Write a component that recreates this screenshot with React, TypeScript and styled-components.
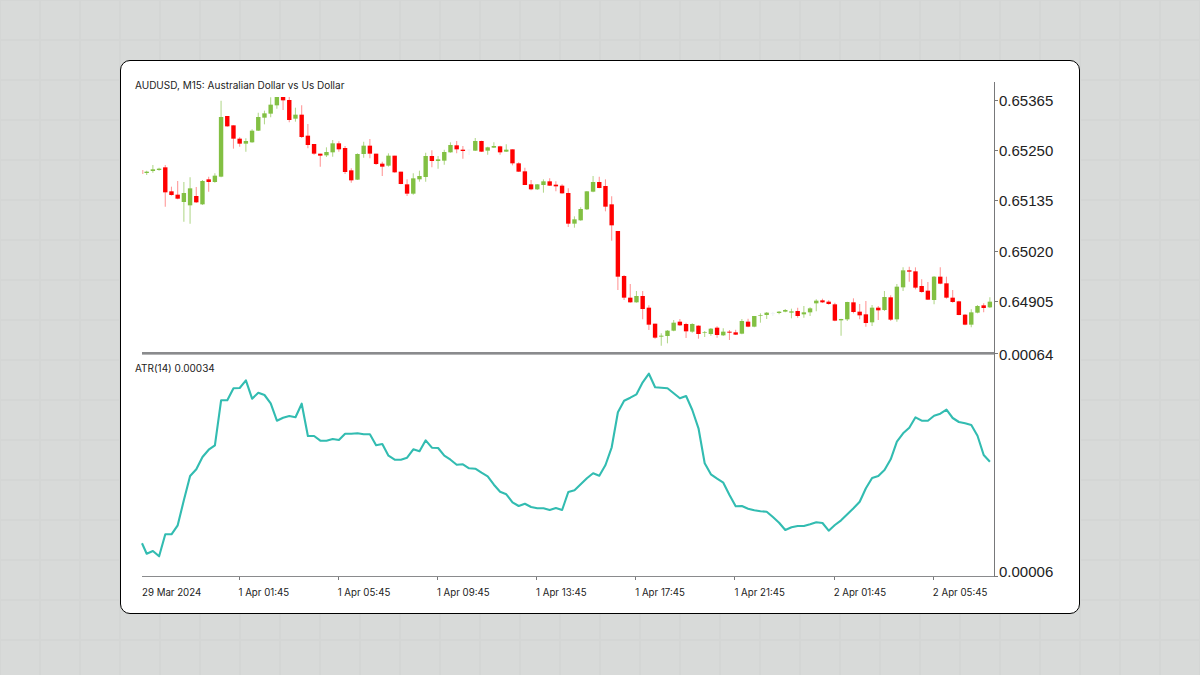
import React from 'react';
import styled, { createGlobalStyle } from 'styled-components';

const GlobalStyle = createGlobalStyle`
    html, body {
        margin: 0;
        padding: 0;
        background: #d8dad9;
    }
`;

const Page = styled.div`
    width: 1200px;
    height: 675px;
    box-sizing: border-box;
    padding-top: 60px;
    display: flex;
    justify-content: center;
    align-items: flex-start;
    background-color: #d8dad9;
    background-image:
        linear-gradient(to right, #d4d6d5 2px, transparent 2px),
        linear-gradient(to bottom, #d4d6d5 2px, transparent 2px);
    background-size: 40px 40px;
    background-position: 39px 39px;
    overflow: hidden;
`;
const Card = styled.main`
    width: 960px;
    height: 554px;
    box-sizing: border-box;
    padding-top: 21px;
    background: #fff;
    border: 1px solid #000;
    border-radius: 10px;
    font-family: Inter, "Liberation Sans", sans-serif;
    color: #222;
`;
const ChartBody = styled.div`
    display: flex;
    height: 495px;
`;
const Plot = styled.div`
    width: 873px;
    box-sizing: border-box;
    padding-left: 21px;
    display: flex;
    flex-direction: column;
`;
const Legend = styled.div<{ $height: number; $line: number }>`
    height: ${props => props.$height}px;
    line-height: ${props => props.$line}px;
    margin-left: -7px;
    font-size: 10px;
    white-space: nowrap;
`;
const Divider = styled.div`
    height: 3px;
    background: linear-gradient(to bottom, #8a8b8d 0, #8a8b8d 2px, #b4b5b6 2px);
`;
const PriceSvg = styled.svg`
    display: block;
    width: 852px;
    height: 255px;
    overflow: hidden;
`;
const AtrSvg = styled.svg`
    display: block;
    width: 852px;
    height: 203px;
    overflow: visible;
    border-bottom: 1px solid #8a8b8d;
`;
const Scale = styled.aside`
    width: 70px;
    box-sizing: border-box;
    padding-top: 9.5px;
    border-left: 1px solid #77787a;
    display: flex;
    flex-direction: column;
`;
const ScaleLabel = styled.div<{ $gap: number; $tick: number }>`
    position: relative;
    height: 18px;
    line-height: 18px;
    margin-top: ${props => props.$gap}px;
    padding-left: 4px;
    font-family: "Liberation Sans", sans-serif;
    font-size: 15px;
    color: #222;

    &::before {
        content: '';
        position: absolute;
        left: 0;
        top: ${props => props.$tick}px;
        width: 3px;
        height: 1px;
        background: #77787a;
    }
`;
const TimeAxis = styled.div`
    display: flex;
    padding-left: 21px;
`;
const TimeLabel = styled.div<{ $width: number; $tick: boolean }>`
    position: relative;
    width: ${props => props.$width}px;
    flex: none;
    padding-top: 9px;
    line-height: 13px;
    font-size: 9.7px;
    white-space: nowrap;

    &::before {
        content: '';
        display: ${props => (props.$tick ? 'block' : 'none')};
        position: absolute;
        left: 0;
        top: 0;
        width: 1px;
        height: 3px;
        background: #77787a;
    }
`;

// traced off the chart in thirds of a pixel: body top, body bottom, wick top, wick bottom
type Candle = [number, number, number, number, 'g' | 'r' | 'p'];

const seg1: Candle[] = [
    [335, 339, 332, 345, 'g'], [328, 333, 315, 338, 'g'], [326, 330, 323, 332, 'g'],
    [322, 397, 315, 440, 'r'], [394, 405, 380, 407, 'r'], [404, 416, 363, 418, 'r'],
    [399, 426, 366, 485, 'g'], [385, 436, 352, 491, 'g'], [408, 427, 381, 429, 'r'],
    [363, 433, 360, 435, 'g'], [358, 366, 350, 395, 'r'], [347, 366, 340, 368, 'g'],
    [171, 350, 122, 352, 'g'], [168, 199, 168, 200, 'r'], [196, 236, 196, 266, 'r'],
    [236, 251, 232, 260, 'r'], [243, 251, 235, 275, 'g'], [212, 247, 208, 248, 'g'],
    [171, 212, 158, 213, 'g'], [160, 173, 152, 193, 'g'], [134, 161, 112, 172, 'g'],
    [100, 136, 100, 146, 'g'], [100, 121, 100, 150, 'r'], [120, 180, 100, 187, 'r'],
    [164, 176, 143, 185, 'g'], [164, 231, 136, 234, 'r'], [227, 255, 192, 265, 'r'],
    [252, 281, 252, 284, 'r'], [281, 287, 281, 320, 'r'], [276, 286, 262, 291, 'g'],
    [250, 277, 240, 290, 'g'], [250, 268, 244, 275, 'r'], [264, 336, 258, 342, 'r'],
    [331, 361, 325, 368, 'r'], [282, 359, 280, 360, 'g'], [257, 282, 245, 293, 'g'],
    [257, 281, 237, 295, 'r'], [281, 312, 281, 315, 'r'], [311, 320, 305, 348, 'r'],
    [287, 317, 280, 320, 'g'], [287, 337, 287, 338, 'r'], [335, 372, 335, 373, 'r'],
    [373, 401, 358, 408, 'r'], [355, 401, 340, 404, 'g'], [348, 358, 332, 365, 'g'],
];
const seg2: Candle[] = [
    [198, 261, 188, 275, 'g'], [198, 213, 181, 232, 'r'], [208, 213, 198, 236, 'g'],
    [186, 212, 179, 224, 'g'], [165, 187, 157, 188, 'g'], [166, 178, 153, 190, 'r'],
    [179, 183, 168, 206, 'r'], [179, 181, 178, 195, 'p'], [153, 182, 144, 183, 'g'],
    [153, 185, 152, 186, 'r'], [172, 182, 170, 194, 'g'], [168, 173, 157, 174, 'g'],
    [169, 187, 167, 194, 'r'], [179, 185, 163, 186, 'g'], [178, 220, 178, 226, 'r'],
    [220, 245, 217, 246, 'r'], [244, 285, 233, 285, 'r'], [283, 298, 270, 301, 'r'],
    [283, 298, 282, 300, 'g'], [274, 285, 268, 308, 'g'], [274, 287, 265, 288, 'r'],
    [284, 289, 274, 304, 'r'], [287, 310, 283, 311, 'r'], [309, 401, 295, 411, 'r'],
    [388, 401, 379, 413, 'g'], [357, 391, 352, 392, 'g'], [304, 358, 303, 360, 'g'],
    [276, 305, 258, 307, 'g'], [276, 294, 260, 295, 'r'], [288, 350, 268, 364, 'r'],
    [343, 406, 319, 452, 'r'],
];
const seg3: Candle[] = [
    [33, 170, 33, 210, 'r'], [168, 233, 165, 240, 'r'], [233, 247, 192, 248, 'r'],
    [228, 247, 213, 248, 'g'], [228, 267, 213, 298, 'r'], [263, 314, 256, 330, 'r'],
    [311, 353, 311, 356, 'r'], [347, 350, 340, 377, 'g'], [332, 348, 330, 370, 'g'],
    [308, 332, 300, 334, 'g'], [305, 316, 297, 318, 'r'], [312, 334, 308, 354, 'r'],
    [312, 335, 310, 338, 'g'], [317, 342, 316, 356, 'r'], [336, 338, 333, 351, 'g'],
    [326, 342, 324, 347, 'g'], [323, 345, 319, 353, 'r'], [335, 346, 325, 348, 'g'],
    [335, 338, 330, 360, 'r'], [337, 344, 329, 345, 'r'], [303, 341, 297, 343, 'g'],
    [305, 320, 296, 322, 'r'], [288, 320, 288, 322, 'g'], [285, 287, 280, 308, 'g'],
    [278, 285, 276, 297, 'g'], [279, 281, 276, 288, 'p'], [275, 279, 273, 283, 'g'],
    [270, 275, 267, 277, 'g'], [274, 278, 266, 295, 'g'], [273, 288, 263, 293, 'r'],
    [277, 283, 258, 293, 'g'], [265, 277, 262, 288, 'g'],
];
const seg4: Candle[] = [
    [242, 250, 238, 274, 'g'], [241, 247, 236, 249, 'r'], [245, 252, 241, 254, 'r'],
    [253, 302, 248, 304, 'r'], [297, 301, 296, 347, 'g'], [246, 298, 245, 303, 'g'],
    [247, 276, 235, 280, 'r'], [275, 286, 252, 298, 'r'], [283, 309, 243, 320, 'r'],
    [263, 307, 255, 318, 'g'], [263, 271, 258, 300, 'r'], [231, 270, 213, 273, 'g'],
    [232, 299, 226, 303, 'r'], [200, 298, 192, 305, 'g'], [151, 202, 142, 213, 'g'],
    [151, 155, 140, 185, 'r'], [154, 203, 142, 208, 'r'], [198, 216, 178, 218, 'r'],
    [212, 239, 186, 240, 'r'], [170, 240, 168, 253, 'g'], [170, 191, 142, 193, 'r'],
    [190, 233, 170, 236, 'r'], [233, 246, 210, 248, 'r'], [244, 285, 242, 286, 'r'],
    [284, 314, 282, 316, 'r'], [277, 314, 268, 322, 'g'], [258, 278, 255, 280, 'g'],
    [256, 264, 250, 277, 'r'], [245, 262, 232, 264, 'g'],
];

const PRICE_TOP = 97;
const ATR_TOP = 373;
const STEP = 6.2;
const FIRST_X = 4.67;

const toPrice = (base: number, rows: Candle[]): Candle[] =>
    rows.map(([a, b, c, d, kind]) => [
        base + a / 3 - PRICE_TOP,
        base + b / 3 - PRICE_TOP,
        base + c / 3 - PRICE_TOP,
        base + d / 3 - PRICE_TOP,
        kind,
    ]);

const candles: Candle[] = [
    ...toPrice(60, seg1),
    ...toPrice(90, seg2),
    ...toPrice(220, seg3),
    ...toPrice(220, seg4),
];

const atrA = [
    611, 603, 619, 553, 553, 526, 450, 378, 358, 321, 299, 286, 151, 151, 115, 114, 91, 146, 128, 135, 160, 212,
    203, 198, 202, 161, 258, 258, 272, 272, 267, 270, 251, 251, 250, 253, 253, 286, 282, 317, 329, 329, 323, 298, 304,
];
const atrB = [
    241, 263, 264, 287, 299, 314, 313, 325, 326, 338, 349, 374, 395, 403, 427, 438, 431, 441, 445, 445, 450, 444, 450,
    396, 391, 373, 355, 340, 347, 315, 262, 157, 122, 113, 103, 67, 41, 82, 83, 85, 100, 115, 108, 150, 205, 310, 343, 356,
];
const atrC = [
    278, 315, 349, 348, 356, 361, 364, 365, 381, 398, 420, 412, 408, 408, 403, 397, 399, 422, 405, 391, 373, 355, 335,
    295, 264, 258, 240, 208, 155, 130, 113, 82, 92, 92, 77, 71, 59, 84, 96, 100, 105, 137, 195, 215,
];

const atrY = [
    ...atrA.map(v => 350 + v / 3),
    ...atrB.map(v => 360 + v / 3),
    ...atrC.map(v => 390 + v / 3),
].map(v => v - ATR_TOP);

const atrPoints = [
    `0,${(543.3 - ATR_TOP).toFixed(1)}`,
    ...atrY.map((y, i) => `${(FIRST_X + STEP * i).toFixed(1)},${y.toFixed(1)}`),
].join(' ');

const bodyColor = { g: '#82c043', r: '#ff0000', p: '#eef2f7' };
const wickColor = { g: '#b5d98f', r: '#ff9a9a', p: '#eef2f7' };

const prices = [
    { text: '0.65365', gap: 0, tick: 8.5 },
    { text: '0.65250', gap: 32.4, tick: 8 },
    { text: '0.65135', gap: 32.4, tick: 8 },
    { text: '0.65020', gap: 32.4, tick: 8 },
    { text: '0.64905', gap: 32.4, tick: 8 },
    { text: '0.00064', gap: 35.1, tick: 7 },
    { text: '0.00006', gap: 198.5, tick: 13 },
];

const times = [
    '29 Mar 2024',
    '1 Apr 01:45',
    '1 Apr 05:45',
    '1 Apr 09:45',
    '1 Apr 13:45',
    '1 Apr 17:45',
    '1 Apr 21:45',
    '2 Apr 01:45',
    '2 Apr 05:45',
];

function App() {
    return (
        <Page>
            <GlobalStyle />
            <Card>
                <ChartBody>
                    <Plot>
                        <Legend $height={15} $line={7}>AUDUSD, M15: Australian Dollar vs Us Dollar</Legend>
                        <PriceSvg viewBox="0 0 852 255">
                            <g stroke="#ff9a9a" strokeWidth="1">
                                <line x1="0.8" x2="0.8" y1="73" y2="77" />
                            </g>
                            {candles.map(([top, bottom, wickTop, wickBottom, kind], i) => {
                                const x = FIRST_X + STEP * i;
                                return (
                                    <g key={i}>
                                        <line x1={x} x2={x} y1={wickTop} y2={wickBottom} stroke={wickColor[kind]} strokeWidth="1.1" />
                                        <rect x={x - 2.2} y={top} width="4.4" height={bottom - top} fill={bodyColor[kind]} />
                                    </g>
                                );
                            })}
                        </PriceSvg>
                        <Divider />
                        <Legend $height={18} $line={27}>ATR(14) 0.00034</Legend>
                        <AtrSvg viewBox="0 0 852 203">
                            <polyline points={atrPoints} fill="none" stroke="#32bcb1" strokeWidth="2.1" strokeLinejoin="round" />
                        </AtrSvg>
                    </Plot>
                    <Scale>
                        {prices.map(p => (
                            <ScaleLabel key={p.text} $gap={p.gap} $tick={p.tick}>{p.text}</ScaleLabel>
                        ))}
                    </Scale>
                </ChartBody>
                <TimeAxis>
                    {times.map((t, i) => (
                        <TimeLabel key={t} $width={i === 0 ? 96.5 : 99.2} $tick={i > 0}>{t}</TimeLabel>
                    ))}
                </TimeAxis>
            </Card>
        </Page>
    );
}

export default App;
